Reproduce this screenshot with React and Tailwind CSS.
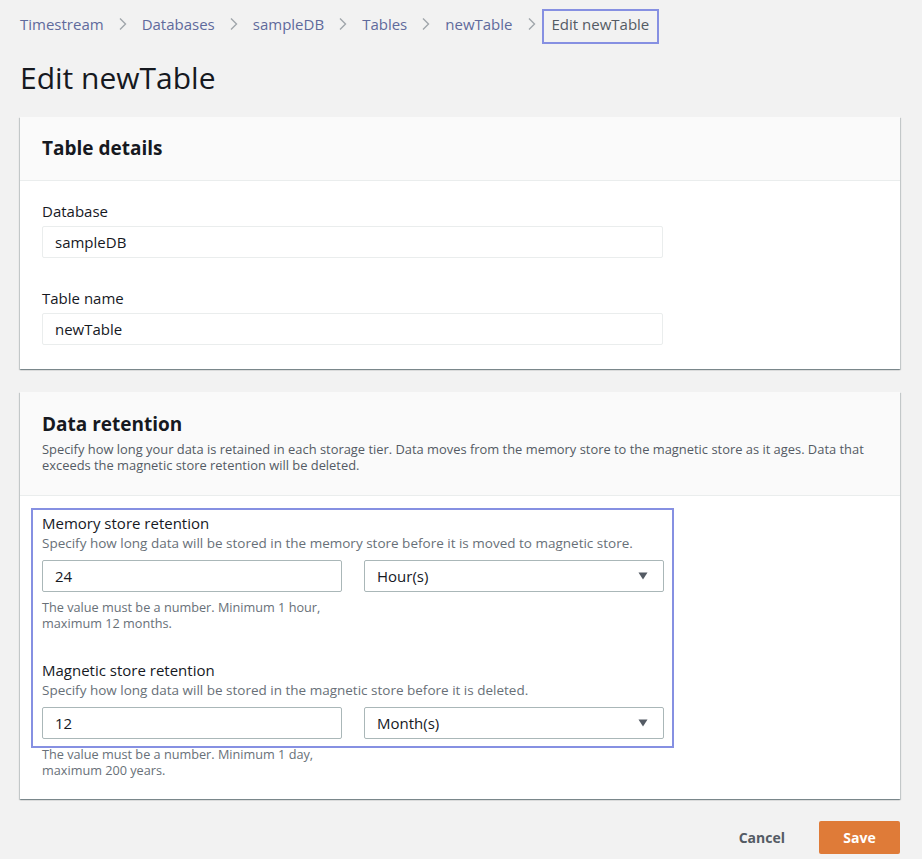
import React from 'react';

const font = { fontFamily: '"Open Sans", "Liberation Sans", sans-serif' };

function Chevron() {
  return (
    <svg width="8" height="14" viewBox="0 0 8 14" className="mx-[15px] shrink-0">
      <path d="M1 1.5 L6.5 7 L1 12.5" fill="none" stroke="#a0a6ab" strokeWidth="1.4" />
    </svg>
  );
}

function Caret() {
  return (
    <svg width="10" height="8" viewBox="0 0 10 8" className="shrink-0">
      <path d="M0.5 0.5 L9.5 0.5 L5 7.5 Z" fill="#545b64" />
    </svg>
  );
}

function Field({ label, value }) {
  return (
    <div className="flex flex-col">
      <label className="text-[15px] leading-[20px] text-[#16191f]">{label}</label>
      <div className="mt-[5px] h-[32px] w-[621px] flex items-center px-[12px] bg-white border border-[#eaeded] rounded-[2px] text-[15px] text-[#16191f]">
        {value}
      </div>
    </div>
  );
}

function Retention({ title, desc, value, unit, hint }) {
  return (
    <div className="flex flex-col">
      <span className="text-[15px] leading-[20px] text-[#16191f]">{title}</span>
      <span className="text-[13.5px] leading-[16px] text-[#687078] mt-[2px]">{desc}</span>
      <div className="grid grid-cols-[300px_300px] gap-[22px] mt-[9px]">
        <div className="h-[32px] flex items-center px-[12px] bg-white border border-[#aab7b8] rounded-[2px] text-[15px] text-[#16191f]">
          {value}
        </div>
        <div className="h-[32px] flex items-center justify-between pl-[12px] pr-[15px] bg-white border border-[#aab7b8] rounded-[2px] text-[15px] text-[#16191f]">
          <span>{unit}</span>
          <Caret />
        </div>
      </div>
      <p className="mt-[7px] w-[300px] text-[12.7px] leading-[16px] text-[#687078]">{hint}</p>
    </div>
  );
}

export default function App() {
  const crumbs = ['Timestream', 'Databases', 'sampleDB', 'Tables', 'newTable'];

  return (
    <div className="min-h-[859px] w-full bg-[#f2f2f2] pl-5 pr-[22px]" style={font}>
      {/* breadcrumbs */}
      <nav className="flex items-center h-[48px] text-[15px]">
        {crumbs.map(c => (
          <React.Fragment key={c}>
            <span className="text-[#5f6a9c]">{c}</span>
            <Chevron />
          </React.Fragment>
        ))}
        <span className="-ml-[9px] mt-[4px] border-2 border-[#8690e2] px-[8px] pb-[4px] h-[35px] flex items-center text-[#545b64]">Edit newTable</span>
      </nav>

      <h1 className="text-[30px] leading-[36px] text-[#16191f] mt-[12px]">Edit newTable</h1>

      {/* Table details */}
      <section className="mt-[21px] bg-white shadow-[0_1px_1px_0_rgba(0,28,36,0.3),1px_1px_1px_0_rgba(0,28,36,0.15),-1px_1px_1px_0_rgba(0,28,36,0.15)]">
        <div className="h-[64px] flex items-center px-[22px] bg-[#fafafa] border-b border-[#eaeded]">
          <h2 className="text-[19px] font-bold text-[#16191f]">Table details</h2>
        </div>
        <div className="px-[22px] pt-[20px] pb-[24px] flex flex-col gap-[30px]">
          <Field label="Database" value="sampleDB" />
          <Field label="Table name" value="newTable" />
        </div>
      </section>

      {/* Data retention */}
      <section className="mt-[23px] bg-white shadow-[0_1px_1px_0_rgba(0,28,36,0.3),1px_1px_1px_0_rgba(0,28,36,0.15),-1px_1px_1px_0_rgba(0,28,36,0.15)]">
        <div className="px-[22px] pt-[20px] pb-[22px] bg-[#fafafa] border-b border-[#eaeded]">
          <h2 className="text-[19px] leading-[24px] font-bold text-[#16191f]">Data retention</h2>
          <p className="mt-[6px] text-[12.9px] leading-[15.5px] text-[#545b64]">
            Specify how long your data is retained in each storage tier. Data moves from the memory store to the magnetic store as it ages. Data that exceeds the magnetic store retention will be deleted.
          </p>
        </div>
        <div className="relative px-[22px] pt-[17px] pb-[21px] flex flex-col gap-[29px]">
          <Retention
            title="Memory store retention"
            desc="Specify how long data will be stored in the memory store before it is moved to magnetic store."
            value="24"
            unit="Hour(s)"
            hint="The value must be a number. Minimum 1 hour, maximum 12 months."
          />
          <Retention
            title="Magnetic store retention"
            desc="Specify how long data will be stored in the magnetic store before it is deleted."
            value="12"
            unit="Month(s)"
            hint="The value must be a number. Minimum 1 day, maximum 200 years."
          />
          {/* highlight annotation */}
          <div className="absolute left-[11px] top-[12px] w-[643px] h-[240px] border-2 border-[#8690e2] pointer-events-none" />
        </div>
      </section>

      {/* footer */}
      <div className="flex items-center justify-end mt-[22px] gap-[34px]">
        <button className="text-[14px] font-bold text-[#545b64]">Cancel</button>
        <button className="h-[33px] w-[81px] rounded-[2px] bg-[#df7b38] text-white text-[14px] font-bold">Save</button>
      </div>
    </div>
  );
}
